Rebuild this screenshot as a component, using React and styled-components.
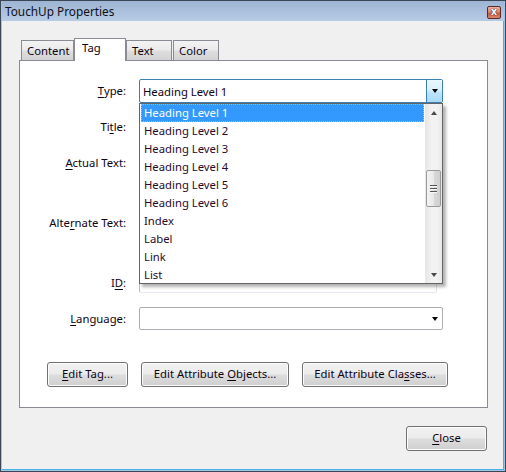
import React from "react";
import styled, { createGlobalStyle } from "styled-components";

const Global = createGlobalStyle`
  html, body { margin: 0; padding: 0; background: #ffffff; }
  body { font-family: "Noto Sans", "Open Sans", sans-serif; font-size: 11.3px; color: #0e0212; }
  * { box-sizing: border-box; }
`;

const Window = styled.div`
  width: 506px;
  height: 472px;
  background: #f0f0f0;
  border: 1px solid #3a4656;
  box-shadow: inset 0 0 0 1px #9fc6e8, inset -1px -1px 0 1px #45b2e2;
  display: flex;
  flex-direction: column;
  overflow: hidden;
`;

const TitleBar = styled.div`
  height: 20px;
  margin: 0 1px;
  display: flex;
  align-items: center;
  justify-content: space-between;
  padding: 0 3px 0 3px;
  background: linear-gradient(#9db5d3, #b7cbe5);
  font-size: 11.8px;
  color: #101018;
`;

const CloseX = styled.div`
  width: 14px;
  height: 13px;
  margin-top: 2px;
  border: 1px solid #5a2a24;
  border-radius: 2px;
  background: linear-gradient(#eab4a8, #d77a66 50%, #c1503c 51%, #d98a70);
  display: flex;
  align-items: center;
  justify-content: center;
  color: #ffffff;
  font-size: 10px;
  font-weight: bold;
  font-family: "DejaVu Sans", sans-serif;
  line-height: 1;
  text-shadow: 0 0 1px #3a1010, 0 0 1px #3a1010;
`;

const Body = styled.div`
  flex: 1;
  display: flex;
  flex-direction: column;
  padding: 17px 0 0 18px;
`;

const TabRow = styled.div`
  display: flex;
  align-items: flex-end;
  height: 23px;
  padding-left: 2px;
  margin-bottom: -1px;
  position: relative;
  z-index: 1;
`;

const Tab = styled.div`
  width: ${(p) => p.$w}px;
  height: ${(p) => (p.$active ? 23 : 21)}px;
  margin-left: ${(p) => p.$ml || 0}px;
  border: 1px solid #898c95;
  border-bottom: ${(p) => (p.$active ? "none" : "1px solid #898c95")};
  background: ${(p) =>
    p.$active
      ? "#ffffff"
      : "linear-gradient(#f3f3f3, #ebebeb 45%, #dddddd 55%, #d3d3d3)"};
  padding: ${(p) => (p.$active ? "1px 0 0 7px" : "2px 0 0 5px")};
  line-height: 16px;
  white-space: nowrap;
`;

const Panel = styled.div`
  width: 469px;
  height: 348px;
  background: #ffffff;
  border: 1px solid #898c95;
  display: flex;
  flex-direction: column;
  padding-top: 18px;
`;

const Row = styled.div`
  display: grid;
  grid-template-columns: 106px auto;
  column-gap: 13px;
  align-items: start;
  margin-top: ${(p) => p.$mt || 0}px;
`;

const Label = styled.div`
  text-align: right;
  line-height: 16px;
  padding-top: ${(p) => p.$pt || 3}px;
  white-space: nowrap;
`;

const U = styled.span`
  text-decoration: underline;
  text-underline-offset: 2px;
`;

const ComboWrap = styled.div`
  position: relative;
  width: 304px;
`;

const Combo = styled.div`
  width: 304px;
  height: ${(p) => p.$h}px;
  background: #ffffff;
  border: 1px solid ${(p) => (p.$focus ? "#3c7fb1" : "#abadb3")};
  border-radius: 2px;
  display: flex;
  align-items: stretch;
`;

const ComboText = styled.div`
  flex: 1;
  padding-left: 3px;
  display: flex;
  align-items: center;
  white-space: nowrap;
`;

const DropBtn = styled.div`
  width: 16px;
  border-left: 1px solid ${(p) => (p.$focus ? "#3c7fb1" : "transparent")};
  background: ${(p) =>
    p.$focus
      ? "linear-gradient(#eaf6fd, #d9f0fc 45%, #bee6fd 55%, #a7d9f5)"
      : "transparent"};
  display: flex;
  align-items: center;
  justify-content: center;
`;

const Arrow = styled.div`
  width: 0;
  height: 0;
  border-left: ${(p) => p.$s || 3.5}px solid transparent;
  border-right: ${(p) => p.$s || 3.5}px solid transparent;
  ${(p) =>
    p.$up
      ? `border-bottom: 4px solid ${p.$c || "#000"};`
      : `border-top: 4px solid ${p.$c || "#000"};`}
`;

const TextField = styled.div`
  width: 298px;
  height: ${(p) => p.$h}px;
  background: #ffffff;
  border: 1px solid #dbdfe6;
  border-top-color: #abadb3;
  border-bottom-color: #e3e9ef;
  border-left-color: #b5b9c0;
  border-radius: 2px;
`;

const DropList = styled.div`
  position: absolute;
  top: 100%;
  left: 0;
  width: 304px;
  height: 181px;
  background: #ffffff;
  border: 1px solid #646464;
  box-shadow: 3px 3px 3px rgba(0, 0, 0, 0.3);
  display: flex;
  z-index: 5;
`;

const Items = styled.div`
  flex: 1;
  display: flex;
  flex-direction: column;
`;

const Item = styled.div`
  height: 18px;
  line-height: 16px;
  padding: 0 0 0 2px;
  margin: 0 1px;
  white-space: nowrap;
  color: ${(p) => (p.$sel ? "#ffffff" : "#2a0a2a")};
  background: ${(p) => (p.$sel ? "#3399ff" : "transparent")};
  border: 1px ${(p) => (p.$sel ? "dotted #e8b060" : "solid transparent")};
`;

const ScrollBar = styled.div`
  width: 17px;
  display: flex;
  flex-direction: column;
  background: linear-gradient(90deg, #e6e6e6, #f2f2f2 40%, #f2f2f2 70%, #e8e8e8);
`;

const ScrollBtn = styled.div`
  height: 17px;
  display: flex;
  align-items: center;
  justify-content: center;
`;

const Track = styled.div`
  flex: 1;
  padding: 49px 1px 0 1px;
`;

const Thumb = styled.div`
  height: 37px;
  border: 1px solid #9a9a9a;
  border-radius: 2px;
  background: linear-gradient(90deg, #f3f3f3, #e8e8e8 50%, #d9d9d9 51%, #cfcfcf);
  display: flex;
  flex-direction: column;
  align-items: center;
  justify-content: center;
  gap: 1px;
`;

const Grip = styled.div`
  width: 7px;
  height: 1px;
  background: #555;
  box-shadow: 0 1px 0 #fafafa;
  margin-bottom: 1px;
`;

const ButtonRow = styled.div`
  display: flex;
  gap: 13px;
  padding-left: 27px;
  margin-top: 32px;
`;

const Button = styled.div`
  width: ${(p) => p.$w}px;
  height: 25px;
  border: 1px solid #707070;
  border-radius: 3px;
  background: linear-gradient(#f2f2f2, #ebebeb 48%, #dddddd 52%, #cfcfcf);
  box-shadow: inset 0 0 0 1px #fcfcfc;
  display: flex;
  align-items: center;
  justify-content: center;
  white-space: nowrap;
  line-height: 16px;
  padding-bottom: 1px;
`;

const Footer = styled.div`
  display: flex;
  justify-content: flex-end;
  padding-right: 18px;
  margin-top: 18px;
`;

const items = [
  "Heading Level 1",
  "Heading Level 2",
  "Heading Level 3",
  "Heading Level 4",
  "Heading Level 5",
  "Heading Level 6",
  "Index",
  "Label",
  "Link",
  "List",
];

export default function App() {
  return (
    <>
      <Global />
      <Window>
        <TitleBar>
          <span>TouchUp Properties</span>
          <CloseX>x</CloseX>
        </TitleBar>
        <Body>
          <TabRow>
            <Tab $w={53}>Content</Tab>
            <Tab $w={52} $active>Tag</Tab>
            <Tab $w={46}>Text</Tab>
            <Tab $w={46} $ml={1}>Color</Tab>
          </TabRow>
          <Panel>
            <Row>
              <Label $pt={4}>
                <U>T</U>ype:
              </Label>
              <ComboWrap>
                <Combo $h={24} $focus>
                  <ComboText>Heading Level 1</ComboText>
                  <DropBtn $focus>
                    <Arrow />
                  </DropBtn>
                </Combo>
                <DropList>
                  <Items>
                    {items.map((t, i) => (
                      <Item key={t} $sel={i === 0}>
                        {t}
                      </Item>
                    ))}
                  </Items>
                  <ScrollBar>
                    <ScrollBtn>
                      <Arrow $up $s={3.5} $c="#4a4a4a" />
                    </ScrollBtn>
                    <Track>
                      <Thumb>
                        <Grip />
                        <Grip />
                        <Grip />
                      </Thumb>
                    </Track>
                    <ScrollBtn>
                      <Arrow $s={3.5} $c="#4a4a4a" />
                    </ScrollBtn>
                  </ScrollBar>
                </DropList>
              </ComboWrap>
            </Row>
            <Row $mt={13}>
              <Label>
                Ti<U>t</U>le:
              </Label>
              <TextField $h={21} />
            </Row>
            <Row $mt={15}>
              <Label>
                <U>A</U>ctual Text:
              </Label>
              <TextField $h={50} />
            </Row>
            <Row $mt={10}>
              <Label>
                Alte<U>r</U>nate Text:
              </Label>
              <TextField $h={50} />
            </Row>
            <Row $mt={10}>
              <Label>
                I<U>D</U>:
              </Label>
              <TextField $h={21} />
            </Row>
            <Row $mt={14}>
              <Label $pt={4}>
                <U>L</U>anguage:
              </Label>
              <Combo $h={23}>
                <ComboText />
                <DropBtn>
                  <Arrow />
                </DropBtn>
              </Combo>
            </Row>
            <ButtonRow>
              <Button $w={81}>
                <span>
                  <U>E</U>dit Tag...
                </span>
              </Button>
              <Button $w={148}>
                <span>
                  Edit Attribute <U>O</U>bjects...
                </span>
              </Button>
              <Button $w={146}>
                <span>
                  Edit Attribute Cla<U>s</U>ses...
                </span>
              </Button>
            </ButtonRow>
          </Panel>
          <Footer>
            <Button $w={81}>
              <span>
                <U>C</U>lose
              </span>
            </Button>
          </Footer>
        </Body>
      </Window>
    </>
  );
}
